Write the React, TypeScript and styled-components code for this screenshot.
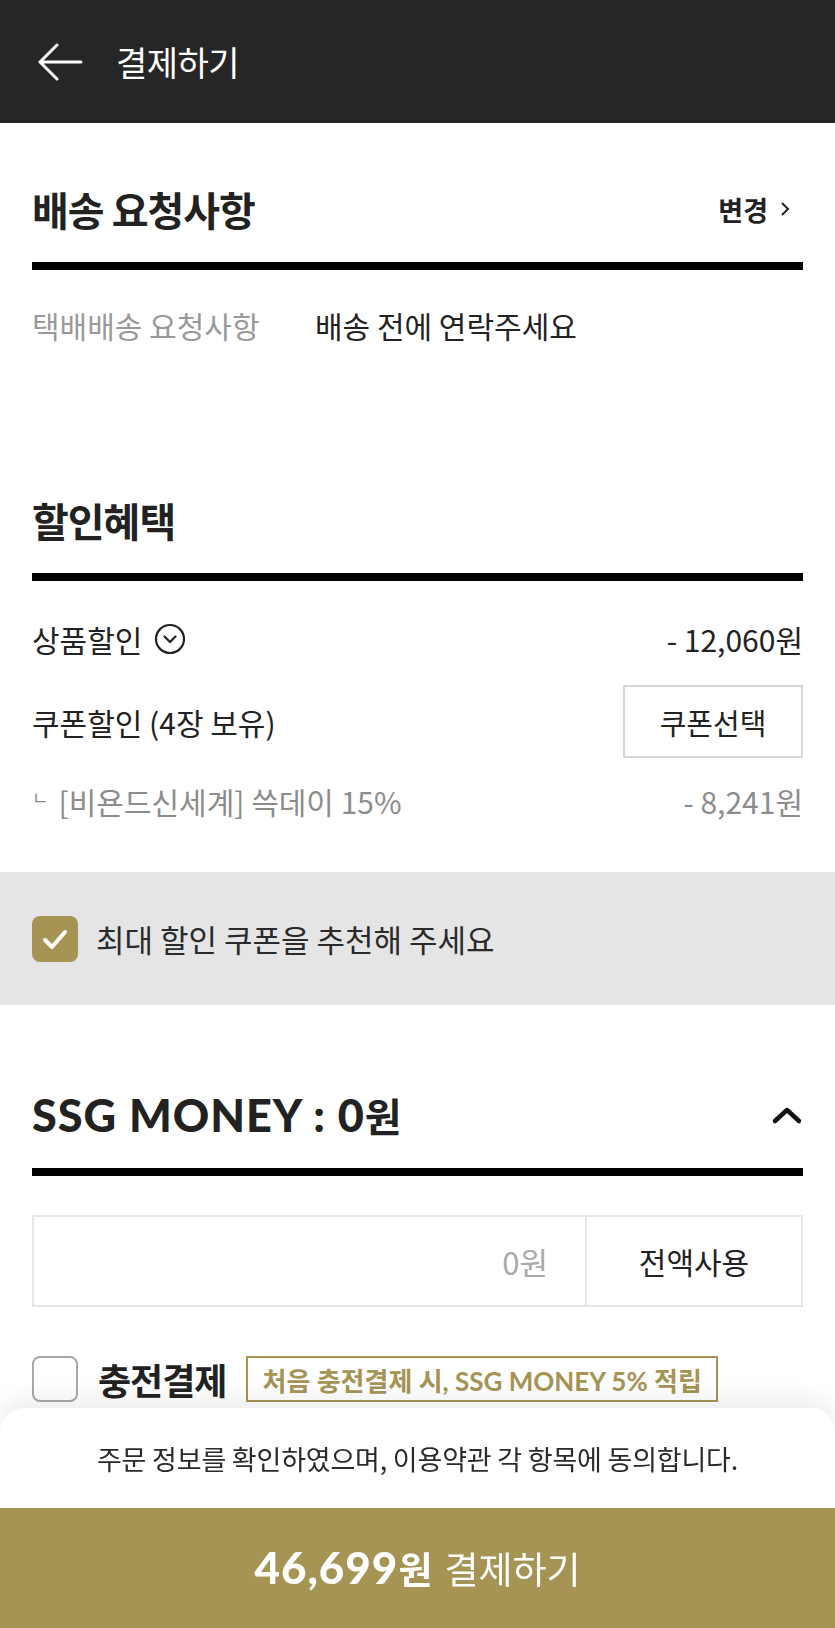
import React from 'react';
import styled, { createGlobalStyle } from 'styled-components';

const GOLD = '#a69455';

const GlobalStyle = createGlobalStyle`
  * { box-sizing: border-box; }
  body {
    margin: 0;
    background: #fff;
    color: #222;
    font-family: "Noto Sans CJK KR", "Noto Sans", sans-serif;
  }
`;

const Page = styled.div`
  padding-bottom: 260px;
`;

const TopBar = styled.header`
  height: 123px;
  background: #262626;
  display: flex;
  align-items: center;
  gap: 33px;
  padding-left: 37px;
  color: #fff;
`;

const TopTitle = styled.h1`
  margin: 0;
  font-size: 34px;
  font-weight: 400;
  letter-spacing: -0.5px;
`;

const Section = styled.section<{ $top: number }>`
  padding: ${(p) => p.$top}px 32px 0;
`;

const SectionHead = styled.div`
  height: 114px;
  display: flex;
  align-items: center;
  justify-content: space-between;
  border-bottom: 8px solid #000;
`;

const SectionTitle = styled.h2`
  margin: 0;
  font-size: 40px;
  font-weight: 700;
  letter-spacing: -1px;
`;

const Latin = styled.span<{ $size: number }>`
  font-family: "Lato", "Noto Sans CJK KR", sans-serif;
  font-weight: 900;
  font-size: ${(p) => p.$size}px;
  letter-spacing: 1px;
`;

const ChangeLink = styled.span`
  display: inline-flex;
  align-items: center;
  gap: 12px;
  font-size: 27px;
  font-weight: 700;
  margin-right: 13px;
`;

const InfoRow = styled.div`
  display: flex;
  align-items: center;
  height: 50px;
  margin: 30px 0 84px;
  font-size: 30px;
`;

const InfoLabel = styled.span`
  color: #999;
  width: 283px;
`;

const Body = styled.div`
  padding: 33px 0 46px;
  display: flex;
  flex-direction: column;
`;

const Row = styled.div<{ $h: number; $mt?: number }>`
  display: flex;
  align-items: center;
  justify-content: space-between;
  height: ${(p) => p.$h}px;
  margin-top: ${(p) => p.$mt ?? 0}px;
  font-size: 30px;
`;

const Muted = styled.span`
  color: #8c8c8c;
`;

const Label = styled.span`
  display: inline-flex;
  align-items: center;
  gap: 12px;
`;

const Corner = styled.span`
  font-size: 18px;
  vertical-align: 9px;
  margin-right: 10px;
`;

const OutlineButton = styled.button`
  width: 180px;
  height: 73px;
  background: #fff;
  border: 2px solid #d6d6d6;
  font-family: inherit;
  font-size: 29px;
  color: #222;
`;

const Band = styled.div`
  height: 133px;
  background: #e5e5e5;
  display: flex;
  align-items: center;
  gap: 18px;
  padding: 0 32px;
  font-size: 31px;
  color: #2a2a2a;
`;

const Box = styled.span<{ $checked?: boolean }>`
  flex: none;
  width: 46px;
  height: 46px;
  border-radius: 8px;
  display: inline-flex;
  align-items: center;
  justify-content: center;
  background: ${(p) => (p.$checked ? GOLD : '#fff')};
  border: ${(p) => (p.$checked ? 'none' : '2px solid #a8a8a8')};
`;

const MoneyField = styled.div`
  margin-top: 39px;
  height: 92px;
  display: flex;
  border: 2px solid #e6e6e6;
`;

const AmountInput = styled.div`
  flex: 1;
  display: flex;
  align-items: center;
  justify-content: flex-end;
  padding-right: 37px;
  font-size: 31px;
  color: #aaa;
`;

const UseAll = styled.div`
  width: 216px;
  display: flex;
  align-items: center;
  justify-content: center;
  border-left: 2px solid #e6e6e6;
  font-size: 30px;
`;

const ChargeRow = styled.div`
  margin-top: 49px;
  height: 46px;
  display: flex;
  align-items: center;
`;

const ChargeTitle = styled.span`
  margin: 0 20px 0 20px;
  font-size: 36px;
  font-weight: 700;
  letter-spacing: -1px;
`;

const Badge = styled.span`
  height: 46px;
  display: inline-flex;
  align-items: center;
  padding: 0 14px;
  border: 2px solid ${GOLD};
  color: ${GOLD};
  font-size: 26px;
  font-weight: 700;
  font-family: "Lato", "Noto Sans CJK KR", sans-serif;
  white-space: nowrap;
`;

const Sheet = styled.div`
  position: fixed;
  left: 0;
  right: 0;
  bottom: 0;
  background: #fff;
  border-radius: 24px 24px 0 0;
  box-shadow: 0 -10px 24px rgba(0, 0, 0, 0.07);
  overflow: hidden;
`;

const Notice = styled.p`
  margin: 0;
  height: 100px;
  display: flex;
  align-items: center;
  justify-content: center;
  font-size: 27px;
  color: #2a2a2a;
  letter-spacing: -0.2px;
`;

const PayButton = styled.button`
  width: 100%;
  height: 120px;
  border: 0;
  background: ${GOLD};
  color: #fff;
  font-family: inherit;
  font-size: 37px;
  display: flex;
  align-items: center;
  justify-content: center;
  gap: 12px;
`;

const PayAmount = styled.b`
  display: inline-flex;
  align-items: baseline;
`;

const BackArrow = () => (
  <svg width="46" height="38" viewBox="0 0 46 38" fill="none" stroke="#fff" strokeWidth="3" strokeLinecap="round" strokeLinejoin="round">
    <path d="M3 19H44M20 2L3 19L20 36" />
  </svg>
);

const SmallChevron = () => (
  <svg width="10" height="16" viewBox="0 0 10 16" fill="none" stroke="#222" strokeWidth="2">
    <path d="M2 2l6 6-6 6" />
  </svg>
);

const CircleChevron = () => (
  <svg width="32" height="32" viewBox="0 0 32 32" fill="none" stroke="#222" strokeWidth="2.2" strokeLinecap="round" strokeLinejoin="round">
    <circle cx="16" cy="16" r="14" />
    <path d="M10.5 13.5L16 19l5.5-5.5" />
  </svg>
);

const UpChevron = () => (
  <svg width="32" height="20" viewBox="0 0 32 20" fill="none" stroke="#111" strokeWidth="4.5" strokeLinecap="round" strokeLinejoin="round">
    <path d="M4 16L16 5l12 11" />
  </svg>
);

const Check = () => (
  <svg width="26" height="22" viewBox="0 0 26 22" fill="none" stroke="#fff" strokeWidth="4" strokeLinecap="round" strokeLinejoin="round">
    <path d="M3 12l7 7L23 4" />
  </svg>
);

export default function App() {
  return (
    <Page>
      <GlobalStyle />
      <TopBar>
        <BackArrow />
        <TopTitle>결제하기</TopTitle>
      </TopBar>

      <Section $top={33}>
        <SectionHead>
          <SectionTitle>배송 요청사항</SectionTitle>
          <ChangeLink>
            변경 <SmallChevron />
          </ChangeLink>
        </SectionHead>
        <InfoRow>
          <InfoLabel>택배배송 요청사항</InfoLabel>
          <span>배송 전에 연락주세요</span>
        </InfoRow>
      </Section>

      <Section $top={33}>
        <SectionHead>
          <SectionTitle>할인혜택</SectionTitle>
        </SectionHead>
        <Body>
          <Row $h={50}>
            <Label>
              상품할인 <CircleChevron />
            </Label>
            <span>- 12,060원</span>
          </Row>
          <Row $h={73} $mt={21}>
            <span>쿠폰할인 (4장 보유)</span>
            <OutlineButton>쿠폰선택</OutlineButton>
          </Row>
          <Row $h={50} $mt={18}>
            <Muted>
              <Corner>ㄴ</Corner>[비욘드신세계] 쓱데이 15%
            </Muted>
            <Muted>- 8,241원</Muted>
          </Row>
        </Body>
      </Section>

      <Band>
        <Box $checked>
          <Check />
        </Box>
        최대 할인 쿠폰을 추천해 주세요
      </Band>

      <Section $top={57}>
        <SectionHead>
          <SectionTitle>
            <Latin $size={45}>SSG MONEY : 0</Latin>원
          </SectionTitle>
          <UpChevron />
        </SectionHead>
        <MoneyField>
          <AmountInput>0원</AmountInput>
          <UseAll>전액사용</UseAll>
        </MoneyField>
        <ChargeRow>
          <Box />
          <ChargeTitle>충전결제</ChargeTitle>
          <Badge>처음 충전결제 시, SSG MONEY 5% 적립</Badge>
        </ChargeRow>
      </Section>

      <Sheet>
        <Notice>주문 정보를 확인하였으며, 이용약관 각 항목에 동의합니다.</Notice>
        <PayButton>
          <PayAmount>
            <Latin $size={44}>46,699</Latin>원
          </PayAmount>
          결제하기
        </PayButton>
      </Sheet>
    </Page>
  );
}
